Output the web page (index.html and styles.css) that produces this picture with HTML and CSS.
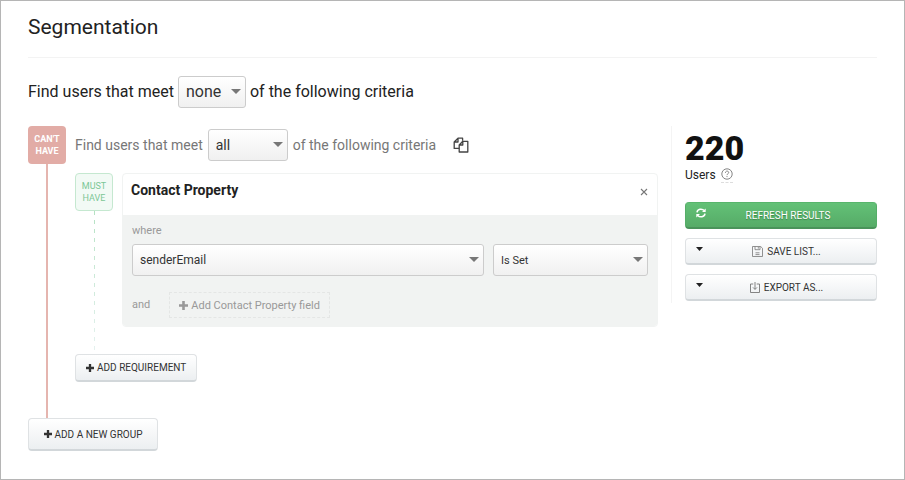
FILE: index.html
```html
<!DOCTYPE html>
<html lang="en">
<head>
<meta charset="utf-8">
<title>Segmentation</title>
<link rel="stylesheet" href="styles.css">
</head>
<body>
<main class="page">
  <header class="page-head"><h1>Segmentation</h1></header>

  <div class="sentence">
    <label for="match-groups">Find users that meet</label>
    <span class="select select-groups"><select id="match-groups"><option>none</option><option>any</option><option>all</option></select></span>
    <span>of the following criteria</span>
  </div>

  <div class="columns">
    <section class="builder">
      <div class="group">
        <div class="rail"><span class="tag tag-cant">CAN'T HAVE</span><span class="rail-line"></span></div>
        <div class="group-body">
          <div class="sentence sentence-sub">
            <label for="match-rules">Find users that meet</label>
            <span class="select select-rules"><select id="match-rules"><option>all</option><option>any</option></select></span>
            <span>of the following criteria</span>
            <button class="icon-button copy" aria-label="Copy group">
              <svg width="16" height="16" viewBox="0 0 16 16" fill="none" stroke="#444" stroke-width="1.3" stroke-linejoin="round"><path d="M6.200 11.400H1.200V5L5 1.200h4.600v2.600M5 1.200V5H1.200"/><path d="M6.200 15V8l3.600-3.700h5V15zM9.800 4.300V8H6.200"/></svg>
            </button>
          </div>
          <div class="requirement">
            <div class="rail"><span class="tag tag-must">MUST HAVE</span><span class="rail-dash"></span></div>
            <article class="card">
              <header class="card-head">
                <h2>Contact Property</h2>
                <button class="icon-button" aria-label="Remove">
                  <svg width="8" height="8" viewBox="0 0 8 8" fill="none" stroke="#777" stroke-width="1.1"><path d="M1 1l6 6M7 1L1 7"/></svg>
                </button>
              </header>
              <div class="card-body">
                <label class="hint" for="field">where</label>
                <div class="fields">
                  <span class="select"><select id="field"><option>senderEmail</option></select></span>
                  <span class="select select-operator"><select aria-label="Operator"><option>Is Set</option></select></span>
                </div>
                <div class="more">
                  <span class="hint">and</span>
                  <button class="add-field"><svg class="plus" width="9" height="9" viewBox="0 0 9 9"><path d="M3.200 0h2.600v3.200H9v2.600H5.800V9H3.200V5.800H0V3.200h3.200z" fill="currentColor"/></svg>Add Contact Property field</button>
                </div>
              </div>
            </article>
          </div>
          <button class="button add-requirement"><svg class="plus" width="8" height="8" viewBox="0 0 9 9"><path d="M3.200 0h2.600v3.200H9v2.600H5.800V9H3.200V5.800H0V3.200h3.200z" fill="currentColor"/></svg>ADD REQUIREMENT</button>
        </div>
      </div>
      <button class="button add-group"><svg class="plus" width="8" height="8" viewBox="0 0 9 9"><path d="M3.200 0h2.600v3.200H9v2.600H5.800V9H3.200V5.800H0V3.200h3.200z" fill="currentColor"/></svg>ADD A NEW GROUP</button>
    </section>

    <aside class="results">
      <strong class="count">220</strong>
      <div class="users">Users
        <button class="icon-button help" aria-label="Help">
          <svg width="12" height="12" viewBox="0 0 12 12" fill="none" stroke="#777" stroke-width="0.9"><circle cx="6" cy="6" r="5.2"/><path d="M4.400 4.800c0-2.200 3.300-2.200 3.300-.200C7.700 5.800 6 5.800 6 7.100M6 8.100v1"/></svg>
        </button>
      </div>
      <div class="actions">
        <button class="button button-primary">
          <svg width="10" height="10" viewBox="0 0 10 10" fill="none" stroke="#fff" stroke-width="1.5"><path d="M1 4.300C1.500.800 6 .200 8.300 2.600M9 5.700C8.500 9.200 4 9.800 1.700 7.400"/><path d="M9.700.400v3.700H6zM.300 9.600V5.900H4z" fill="#fff" stroke="none"/></svg>
          <span class="label">REFRESH RESULTS</span>
        </button>
        <button class="button">
          <svg width="7" height="4" viewBox="0 0 7 4"><path d="M0 0h7L3.500 4z" fill="#222"/></svg>
          <span class="label"><svg width="11" height="11" viewBox="0 0 11 11" fill="none" stroke="#777" stroke-width="0.8"><path d="M.500.500h8.200l1.800 1.800v8.200H.500zM3 .500v3.200h5V.500M6.300 1v1.700M3.500 6.800h4M3.500 8.600h4"/></svg>SAVE LIST...</span>
        </button>
        <button class="button">
          <svg width="7" height="4" viewBox="0 0 7 4"><path d="M0 0h7L3.500 4z" fill="#222"/></svg>
          <span class="label"><svg width="10" height="11" viewBox="0 0 10 11" fill="none" stroke="#777" stroke-width="0.9"><path d="M3.300 2H.500v8.500h9V2H6.700M5 0v7.300M3 5.400l2 2 2-2"/></svg>EXPORT AS...</span>
        </button>
      </div>
    </aside>
  </div>
</main>
</body>
</html>
```
FILE: styles.css
```css
* { box-sizing: border-box; }

body {
  margin: 0;
  background: #fff;
  color: #222;
  font-family: Roboto, "Liberation Sans", sans-serif;
  font-size: 12px;
}

button, select { font: inherit; color: inherit; margin: 0; }
svg { display: block; flex: none; }

.page {
  min-height: 100vh;
  padding: 0 27px 28px;
  border: 1px solid #b5b5b5;
}

.page-head {
  padding: 14px 0 17px;
  border-bottom: 1px solid #f3f3f3;
}

h1 { margin: 0; font-size: 21px; line-height: 25px; font-weight: 400; }

.sentence {
  display: flex;
  align-items: center;
  gap: 4px;
  margin-top: 18px;
  font-size: 16px;
  line-height: 20px;
  white-space: nowrap;
}

.sentence-sub { margin-top: 3px; color: #777; font-size: 14px; gap: 5px; }

.select { position: relative; display: block; flex: 1; min-width: 0; color: #333; font-size: 12px; }

.select::after {
  content: "";
  position: absolute;
  right: 5px;
  top: 13px;
  border: 5px solid transparent;
  border-top-color: #777;
  border-bottom: 0;
  pointer-events: none;
}

.select select {
  display: block;
  width: 100%;
  height: 32px;
  padding: 0 7px;
  appearance: none;
  border: 1px solid #ccc;
  border-radius: 3px;
  background: linear-gradient(#fff, #f0f0f0);
}

.select-groups { flex: none; width: 68px; font-size: 16px; }
.select-rules { flex: none; width: 80px; font-size: 14px; }
.select-operator { flex: 0 0 155px; font-size: 11px; }

.icon-button { padding: 0; border: 0; background: none; }
.copy { margin-left: 12px; }

.columns { display: flex; align-items: flex-start; gap: 13px; margin-top: 18px; }
.builder { flex: 1; min-width: 0; }

.group, .requirement { display: grid; grid-template-columns: 38px minmax(0, 1fr); gap: 9px; }
.requirement { margin-top: 12px; }
.rail { display: flex; flex-direction: column; align-items: center; }
.group-body { padding-bottom: 36px; }

.tag {
  width: 38px;
  height: 38px;
  padding: 7px 0;
  border-radius: 4px;
  font-size: 9px;
  line-height: 12px;
  text-align: center;
}

.tag-cant { background: #e2aca6; color: #fff; font-weight: 700; }
.tag-must { padding: 6px 0; background: #f2faf5; border: 1px solid #c5e8d0; color: #7cc795; }
.rail-line { flex: 1; width: 2px; background: #e5b5af; }

.rail-dash {
  flex: 1;
  width: 1px;
  background:
    repeating-linear-gradient(transparent 0 4px, #fff 4px 9px),
    linear-gradient(#b5e2c3, #e6f2f0);
}

.card { margin-bottom: 27px; border: 1px solid #f1f3f2; border-radius: 4px; overflow: hidden; }

.card-head {
  display: flex;
  justify-content: space-between;
  align-items: flex-start;
  padding: 6px 9px 15px 8px;
}

.card-head .icon-button { margin-top: 8px; }
h2 { margin: 0; font-size: 14px; line-height: 20px; font-weight: 700; }
.card-body { padding: 8px 9px; background: #f1f3f2; }
.hint { display: block; color: #999; font-size: 11px; line-height: 16px; }
.fields { display: flex; gap: 9px; margin-top: 5px; }
.more { display: flex; align-items: center; gap: 19px; margin-top: 16px; }

.add-field {
  display: flex;
  align-items: center;
  gap: 3px;
  height: 26px;
  padding: 0 9px;
  border: 1px dashed #e4e6e5;
  background: none;
  color: #999;
  font-size: 11px;
}

.button {
  display: flex;
  align-items: center;
  justify-content: center;
  height: 28px;
  padding: 0 10px;
  border: 1px solid #dfe2e4;
  border-bottom: 2px solid #d2d7da;
  border-radius: 4px;
  background: linear-gradient(#fff, #eceff1);
  color: #333;
  font-size: 10px;
  white-space: nowrap;
}

.button > .plus { margin-right: 3px; }
.add-requirement { min-width: 122px; }
.add-group { min-width: 130px; height: 33px; }

.results { flex: 0 0 206px; padding: 5px 0 2px 13px; border-left: 1px solid #f4f4f4; }
.count { display: block; color: #111; font-size: 34px; line-height: 34px; font-weight: 900; }
.users { display: flex; align-items: center; gap: 5px; font-size: 12px; line-height: 20px; }
.help { padding-bottom: 2px; border-bottom: 1px dashed #ddd; }
.actions { display: grid; gap: 9px; margin-top: 17px; }
.actions .button { height: 27px; padding: 0 10px; }
.actions .button > svg { margin-bottom: 5px; }
.label { display: flex; flex: 1; align-items: center; justify-content: center; gap: 4px; padding-left: 4px; }

.button-primary {
  border-color: #58b56c #55ad68 #4a935a;
  background: linear-gradient(#63c177, #56ab67);
  color: #fff;
  text-shadow: 0 1px 1px #3c804a;
}
```
